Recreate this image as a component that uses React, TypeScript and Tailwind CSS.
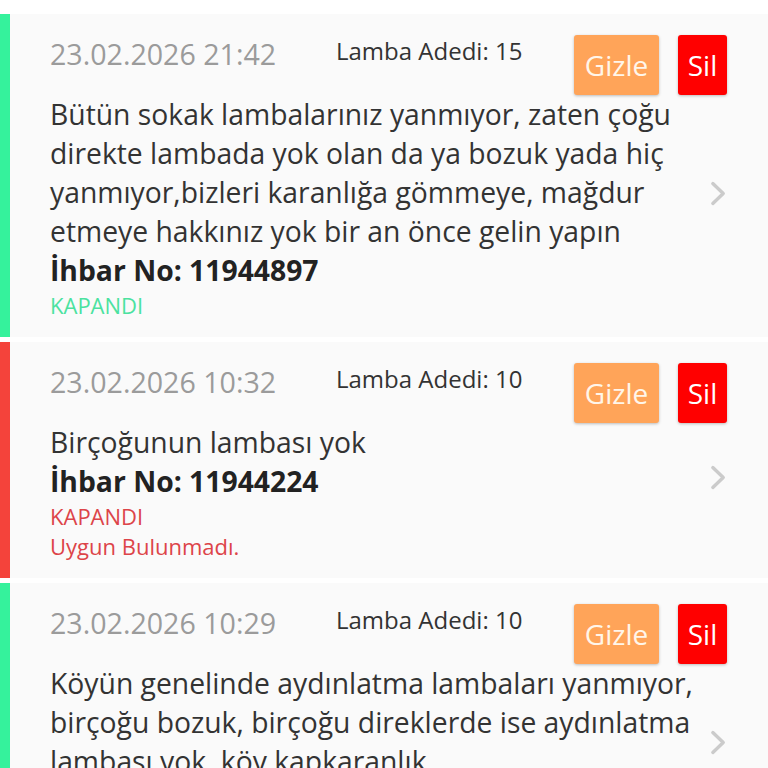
interface Report {
  id: string;
  date: string;
  lampCount: number;
  text: string;
  status: "closed-ok" | "closed-rejected";
  note?: string;
}

const reports: Report[] = [
  {
    id: "11944897",
    date: "23.02.2026 21:42",
    lampCount: 15,
    text: "Bütün sokak lambalarınız yanmıyor, zaten çoğu direkte lambada yok olan da ya bozuk yada hiç yanmıyor,bizleri karanlığa gömmeye, mağdur etmeye hakkınız yok bir an önce gelin yapın",
    status: "closed-ok",
  },
  {
    id: "11944224",
    date: "23.02.2026 10:32",
    lampCount: 10,
    text: "Birçoğunun lambası yok",
    status: "closed-rejected",
    note: "Uygun Bulunmadı.",
  },
  {
    id: "11944101",
    date: "23.02.2026 10:29",
    lampCount: 10,
    text: "Köyün genelinde aydınlatma lambaları yanmıyor, birçoğu bozuk, birçoğu direklerde ise aydınlatma lambası yok, köy kapkaranlık",
    status: "closed-ok",
  },
];

function Chevron() {
  return (
    <svg width="18" height="27" viewBox="0 0 18 27" fill="none">
      <polyline points="3,3 14,13.5 3,24" stroke="#cbcbcb" strokeWidth="3.6" strokeLinecap="round" strokeLinejoin="round" />
    </svg>
  );
}

function ReportCard({ report }: { report: Report }) {
  const ok = report.status === "closed-ok";
  return (
    <div
      className={`grid grid-cols-[1fr_17px] gap-x-1 bg-[#fafafa] border-l-[10px] pl-10 pr-[41px] pt-[21px] pb-[17px] ${
        ok ? "border-[#35f29c]" : "border-[#f4433b]"
      }`}
    >
      <div className="col-span-2 col-start-1 row-start-1 flex items-start">
        <span className="w-[286px] shrink-0 text-[28.6px] leading-[38px] text-[#9b9b9b]">{report.date}</span>
        <span className="text-[24px] leading-[32px] text-[#333]">Lamba Adedi: {report.lampCount}</span>
        <div className="ml-auto flex gap-[19px]">
          <button className="h-[60px] w-[85px] rounded-[3px] bg-[#ffa459] text-[28px] text-[#fff6ea] shadow-[0_1px_3px_rgba(0,0,0,0.25)]">
            Gizle
          </button>
          <button className="h-[60px] w-[49px] rounded-[3px] bg-[#ff0000] text-[28px] text-white shadow-[0_1px_3px_rgba(0,0,0,0.25)]">
            Sil
          </button>
        </div>
      </div>
      <div className="col-start-1 row-start-2 flex flex-col">
        <p className="text-[28.3px] leading-[39px] text-[#333]">{report.text}</p>
        <p className="text-[28.3px] leading-[39px] font-bold text-[#222]">İhbar No: {report.id}</p>
        <p className={`text-[22px] leading-[30px] ${ok ? "text-[#4be2a0]" : "text-[#dd4449]"}`}>KAPANDI</p>
        {report.note && <p className="text-[22px] leading-[30px] text-[#dd4449]">{report.note}</p>}
      </div>
      <div className="col-start-2 row-start-1 row-span-2 flex items-center justify-end pt-[31px]">
        <Chevron />
      </div>
    </div>
  );
}

export default function App() {
  return (
    <div className="min-h-screen bg-white pt-[14px] font-['Open_Sans',sans-serif]">
      <div className="flex flex-col gap-[5px]">
        {reports.map((r) => (
          <ReportCard key={r.id} report={r} />
        ))}
      </div>
    </div>
  );
}
